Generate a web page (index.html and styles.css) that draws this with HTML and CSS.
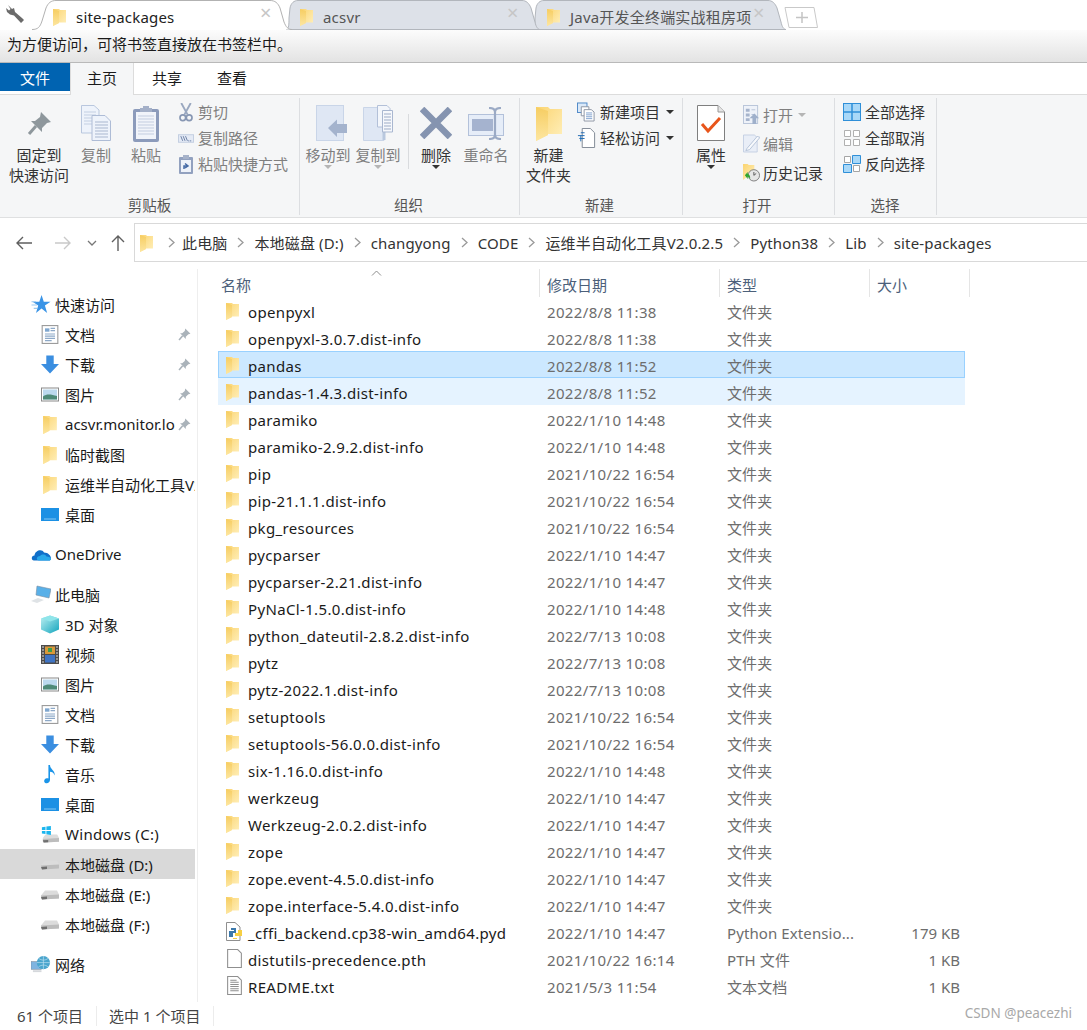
FILE: index.html
```html
<!DOCTYPE html>
<html lang="zh-CN">

<head>
  <meta charset="UTF-8">
  <title>site-packages</title>
  <link rel="stylesheet" href="styles.css">
</head>

<body>
  <svg class="sprite" xmlns="http://www.w3.org/2000/svg">
    <defs>
      <linearGradient id="folderBody" x1="0" y1="0" x2="1" y2="1">
        <stop offset="0" stop-color="#fbd470" />
        <stop offset="1" stop-color="#fff0bd" />
      </linearGradient>
      <linearGradient id="folderFront" x1="0" y1="0" x2="0" y2="1">
        <stop offset="0" stop-color="#f6cd62" />
        <stop offset="1" stop-color="#fde6a0" />
      </linearGradient>
      <linearGradient id="cube" x1="0" y1="0" x2="1" y2="1">
        <stop offset="0" stop-color="#bdf0f2" />
        <stop offset="1" stop-color="#12a5bd" />
      </linearGradient>
    </defs>
    <symbol id="i-folder" viewBox="0 0 13 18">
      <path d="M0 1H6L7 2H13V14.5H6V15L0 18Z" fill="url(#folderBody)" />
      <path d="M0 1L6 3V15L0 18Z" fill="url(#folderFront)" />
    </symbol>
    <symbol id="i-pin" viewBox="0 0 25 25">
      <path d="M14 1L24 11L20 12L15 17L15 21L4 10L8 10L13 6Z" fill="currentColor" />
      <path d="M9 15L2 23" stroke="currentColor" stroke-width="3" />
    </symbol>
    <symbol id="i-copy" viewBox="0 0 30 36">
      <path d="M.5.5H13L18 5V28H.5Z" fill="#eef3fb" stroke="#b9c7de" />
      <path d="M3 7H15M3 10H15M3 13H15M3 16H15M3 19H15" stroke="#c3cfe2" />
      <path d="M11 10.500H24L29.500 16V35.500H11Z" fill="#eef3fb" stroke="#aebcd6" />
      <path d="M14 17H27M14 20H27M14 23H27M14 26H27M14 29H27M14 32H27" stroke="#a9b7cf" />
    </symbol>
    <symbol id="i-paste" viewBox="0 0 26 37">
      <rect y="4" width="26" height="33" rx="2" fill="#8c9bbb" />
      <rect x="3" y="7" width="20" height="27" fill="#f1f4fa" />
      <path d="M5 11H21M5 14H21M5 17H21M5 20H21M5 23H21M5 26H21M5 29H21" stroke="#c3cde0" />
      <path d="M10 3H16V1H10ZM7 3H19V7H7Z" fill="#a4b0c8" />
    </symbol>
    <symbol id="i-cut" viewBox="0 0 13 18">
      <path d="M2 0L8 11M11 0L5 11" stroke="#9aa8c0" stroke-width="1.800" fill="none" />
      <circle cx="3.500" cy="14" r="2.700" fill="none" stroke="#8797b3" stroke-width="1.600" />
      <circle cx="9.500" cy="14" r="2.700" fill="none" stroke="#8797b3" stroke-width="1.600" />
    </symbol>
    <symbol id="i-path" viewBox="0 0 17 9">
      <rect x=".5" y=".5" width="16" height="8" fill="#e4eaf5" stroke="#c2cde0" />
      <path d="M3 2L5 7M5.500 2L7.500 7M8 2L10 7" stroke="#48628f" stroke-width=".8" />
      <path d="M11 7H15" stroke="#48628f" stroke-dasharray="1 1" />
    </symbol>
    <symbol id="i-shortcut" viewBox="0 0 14 19">
      <rect y="2" width="14" height="17" rx="1" fill="#92a1bf" />
      <rect x="2" y="5" width="10" height="12" fill="#eef2f9" />
      <rect x="4" y="0" width="6" height="4" fill="#a6b2c9" />
      <path d="M5 14V11H8M6 8.500L9 11L6 13" stroke="#456aa5" stroke-width="1.500" fill="none" />
    </symbol>
    <symbol id="i-moveto" viewBox="0 0 33 36">
      <rect x=".5" y=".5" width="27" height="35" fill="#dfe7f4" stroke="#c9d5e8" />
      <path d="M13 27L22 18.500V23H32V32H22V36Z" transform="translate(-1 -4)" fill="#a4b3cd" />
    </symbol>
    <symbol id="i-copyto" viewBox="0 0 30 36">
      <path d="M.5 2.500H21V35.500H.5Z" fill="#dfe7f4" stroke="#c9d5e8" />
      <path d="M21 25V35" stroke="#b9c8de" stroke-width="3" />
      <path d="M14.500.500H24L27 3.500V22H14.500Z" fill="#f3f6fb" stroke="#b3c0d8" />
      <path d="M19.500 5.500H29.500V27H19.500Z" fill="#f6f8fc" stroke="#a9b7d0" />
      <path d="M21 9H28M21 12H28M21 15H28M21 18H28M21 21H28M21 24H28" stroke="#9cabc6" />
    </symbol>
    <symbol id="i-delete" viewBox="0 0 32 32">
      <path d="M2 2L30 30M30 2L2 30" stroke="#8594b0" stroke-width="6.500" />
    </symbol>
    <symbol id="i-rename" viewBox="0 0 36 33">
      <rect x=".5" y="10.500" width="35" height="21" transform="translate(0 -3)" fill="#e6edf8" stroke="#b3c1da" />
      <rect x="4" y="12" width="21" height="12" fill="#a5b3cf" />
      <path d="M21 1C24 1 27 2 27 5V28C27 31 24 32 21 32M33 1C30 1 27 2 27 5M33 32C30 32 27 31 27 28" stroke="#9baac5" stroke-width="2.200" fill="none" />
    </symbol>
    <symbol id="i-newitem" viewBox="0 0 20 20">
      <rect x=".5" y=".5" width="10" height="10" fill="#dbe9f8" stroke="#4d87c7" />
      <path d="M4.500 4.500H12.500V14H4.500Z" fill="#fff" stroke="#8c95a3" />
      <path d="M7.500 7.500H15L18 10V19.500H7.500Z" fill="#fff" stroke="#8c95a3" />
      <path d="M9.500 11H16M9.500 13H16M9.500 15H16M9.500 17H16" stroke="#7d9fcc" />
    </symbol>
    <symbol id="i-easy" viewBox="0 0 18 21">
      <path d="M4.500.500H13L17.500 5V20.500H4.500Z" fill="#fff" stroke="#7e8794" />
      <path d="M0 8H7M1.500 11H7M3 5H7M3 8V14" stroke="#1d6ab4" fill="none" />
    </symbol>
    <symbol id="i-props" viewBox="0 0 28 36">
      <path d="M.5.500H21L27.500 7V35.500H.5Z" fill="#fff" stroke="#7f7f7f" />
      <path d="M21 .5V7H27.500" fill="#e5e5e5" stroke="#999" />
      <path d="M5 19L11 26L23 13" stroke="#e8551b" stroke-width="3" fill="none" />
    </symbol>
    <symbol id="i-open" viewBox="0 0 18 20">
      <rect x=".5" y=".5" width="15" height="19" fill="#eef2f9" stroke="#b7c3d8" />
      <path d="M3 4H7V7H3ZM3 9H7V12H3ZM3 14H7V17H3Z" fill="#a6b4cc" />
      <path d="M9 5H13M9 10H13" stroke="#b6c2d7" />
      <path d="M7 14L12 9L17 14H14V20H10V14Z" fill="#9fb0cb" />
    </symbol>
    <symbol id="i-edit" viewBox="0 0 18 19">
      <path d="M.5.500H12L15 3V18.500H.5Z" fill="#e9eef7" stroke="#c3cfe2" />
      <path d="M4 15L15 2L18 3L7 16L3 17Z" fill="#f7f9fc" stroke="#b5c2d8" />
    </symbol>
    <symbol id="i-history" viewBox="0 0 18 20">
      <path d="M0 1H5L6 2H12V14H5L0 18Z" fill="url(#folderBody)" />
      <circle cx="11.500" cy="13" r="6" fill="#e6e6e6" stroke="#7b7b7b" />
      <path d="M11.500 9.500V13L14 11" stroke="#555" fill="none" />
      <path d="M2 13L5 9.500V11.500C7 12 8 14 7.500 17C6.500 15 6 14.500 5 14.500V17Z" fill="#2fa52f" />
    </symbol>
    <symbol id="i-selall" viewBox="0 0 18 18">
      <rect x=".5" y=".5" width="17" height="17" fill="#a9d8f8" stroke="#2f8fd8" />
      <path d="M9 0V18M0 9H18" stroke="#2f8fd8" stroke-width="1.500" />
    </symbol>
    <symbol id="i-selnone" viewBox="0 0 18 18">
      <path d="M1.500 1.500H7.500V7.500H1.500ZM10.500 1.500H16.500V7.500H10.500ZM1.500 10.500H7.500V16.500H1.500ZM10.500 10.500H16.500V16.500H10.500Z" fill="#fff" stroke="#b0b0b0" />
    </symbol>
    <symbol id="i-selinv" viewBox="0 0 18 18">
      <path d="M1.500 1.500H7.500V7.500H1.500ZM10.500 10.500H16.500V16.500H10.500Z" fill="#fff" stroke="#a5a5a5" />
      <path d="M9.500.500H17.500V8.500H9.500ZM.5 9.500H8.500V17.500H.5Z" fill="#a9d8f8" stroke="#2f8fd8" />
    </symbol>
    <symbol id="i-wrench" viewBox="0 0 19 18">
      <path d="M2 0L6 4L8 3L9 7L16 13L18 15L15 18L8 10.500L4 9.500L1 7L0 3L3 5.500L4.500 4Z" fill="#6b6b6b" />
    </symbol>
    <symbol id="i-star" viewBox="0 0 17 17">
      <path d="M9 0L11 6H17L12 9.500L14 16L9 12L4 16L6 9.500L1 6H7Z" fill="#3a94e6" />
      <path d="M0 6H4M0 9H5M2 12H5" stroke="#9cc9ef" />
    </symbol>
    <symbol id="i-doc" viewBox="0 0 15 17">
      <rect x=".5" y=".5" width="14" height="16" fill="#fff" stroke="#9c9c9c" />
      <path d="M3 3H7V6H3Z" fill="#7fa7cf" />
      <path d="M8 3H12M8 5H12M3 8H12M3 10H12M3 12H12M3 14H9" stroke="#8da9c8" />
    </symbol>
    <symbol id="i-down" viewBox="0 0 17 17">
      <path d="M5 0H12V8H17L8.500 17L0 8H5Z" fill="#3b8ee0" />
    </symbol>
    <symbol id="i-pics" viewBox="0 0 18 14">
      <rect x=".5" y=".5" width="17" height="13" fill="#fff" stroke="#8a8a8a" />
      <rect x="2" y="2" width="14" height="10" fill="#bcd9ee" />
      <path d="M2 9C6 6 10 7 16 8.500V12H2Z" fill="#4f8a78" />
    </symbol>
    <symbol id="i-desk" viewBox="0 0 18 13">
      <rect width="18" height="13" fill="#1b90e4" />
      <path d="M3 11H15" stroke="#85c6f2" />
    </symbol>
    <symbol id="i-cloud" viewBox="0 0 20 14">
      <path d="M3 13C0 13 0 8 3.500 8C4 3 11 1 13 5C17 5 20 8 20 11C20 12.500 19 13 18 13Z" fill="#0f6fc9" />
      <path d="M8 13C5 13 5 8.500 9 8.500C11 6.500 14 6.500 15.500 9C18 9 20 10 20 11C20 12.500 19 13 18 13Z" fill="#28a8ea" />
    </symbol>
    <symbol id="i-pc" viewBox="0 0 20 17">
      <path d="M6 0L20 3L18 12L5 9Z" fill="#59b0e8" stroke="#7a8ea3" stroke-width=".6" />
      <path d="M0 15L7 12L13 14L6 17Z" fill="#dfe3e6" />
    </symbol>
    <symbol id="i-cube" viewBox="0 0 18 18">
      <path d="M9 0L18 3V14L9 18L0 14V3Z" fill="url(#cube)" />
      <path d="M0 3L9 6L18 3L9 0Z" fill="#8fe5ea" />
    </symbol>
    <symbol id="i-video" viewBox="0 0 18 19">
      <rect width="18" height="19" fill="#4c4c4c" />
      <rect x="4" y="1.500" width="10" height="7.500" fill="#d99a3a" />
      <rect x="4" y="10" width="10" height="7.500" fill="#3f74c4" />
      <path d="M7 3H11V7H7Z" fill="#3d9b4f" />
      <path d="M1 2H3M1 5H3M1 8H3M1 11H3M1 14H3M1 17H3M15 2H17M15 5H17M15 8H17M15 11H17M15 14H17M15 17H17" stroke="#ddd" />
    </symbol>
    <symbol id="i-music" viewBox="0 0 12 18">
      <path d="M4.500 0H6C6 4 11 5 10.500 10C9.500 7.500 8 6.500 6 6.500V14C6 16.500 3.500 18 1.500 17C0 16 0 13 3 12.500C3.500 12.400 4 12.500 4.500 12.800Z" fill="#1a94e8" />
    </symbol>
    <symbol id="i-drive" viewBox="0 0 18 10">
      <path d="M0 6L4 1H16L18 5V9L1 10L0 9Z" fill="#dcdcdc" />
      <path d="M0 6L18 5V9L1 10Z" fill="#bdbdbd" />
      <path d="M0 7.500L6 7V9.500L1 10Z" fill="#6f6f6f" />
    </symbol>
    <symbol id="i-windrive" viewBox="0 0 20 20">
      <path d="M2 14L5 10H18L20 14V18L3 19L2 18Z" fill="#dcdcdc" />
      <path d="M2 15L20 14V18L3 19Z" fill="#bdbdbd" />
      <path d="M2 16.500L8 16V18.500L3 19Z" fill="#6f6f6f" />
      <path d="M1 2L5 1.500V5H1ZM6 1.200L11 .5V5H6ZM1 6H5V9.500L1 9ZM6 6H11V10.500L6 9.700Z" fill="#1bb5ee" />
    </symbol>
    <symbol id="i-network" viewBox="0 0 21 18">
      <rect x="0" y="6" width="11" height="8" fill="#7fb4e0" stroke="#7a8a9a" stroke-width=".6" />
      <path d="M2 15H11V17H2Z" fill="#d5d8dc" />
      <circle cx="13" cy="7" r="7" fill="#4aa5cd" />
      <path d="M13 0V14M6 7H20M8 2.500C11 5 15 5 18 2.500M8 11.500C11 9 15 9 18 11.500" stroke="#bfe3f2" stroke-width=".7" fill="none" />
    </symbol>
    <symbol id="i-pyd" viewBox="0 0 17 19">
      <path d="M.5.500H9L14 5V18.500H.5Z" fill="#fff" stroke="#8f8f8f" />
      <path d="M5 6H10V11H7V15H3V9H8V8H5Z" fill="#3c79ab" />
      <path d="M16 8V14H11V17H7V16H11V14H9V11H12V8Z" fill="#f6cf44" />
    </symbol>
    <symbol id="i-file" viewBox="0 0 14 18">
      <path d="M.5.500H10L13.500 4V17.500H.5Z" fill="#fff" stroke="#8f8f8f" />
    </symbol>
    <symbol id="i-txt" viewBox="0 0 14 18">
      <path d="M.5.500H10L13.500 4V17.500H.5Z" fill="#fff" stroke="#8f8f8f" />
      <path d="M3 4H9M3 6H11M3 8H11M3 10H11M3 12H11M3 14H11" stroke="#8f8f8f" />
    </symbol>
  </svg>

  <div class="tabbar">
    <svg class="wrench"><use href="#i-wrench" /></svg>
    <div class="tab tab-active">
      <svg class="tab-shape" viewBox="0 0 260 30"><path d="M0 29.500C6 29.500 8 27 10 21L14 8C16 3 19 .5 24 .5H238C243 .5 246 3 248 8L252 22C254 27 256 29.500 260 29.500" fill="#fff" stroke="#b2b2b2" /></svg>
      <svg class="folder"><use href="#i-folder" /></svg>
      <span class="tab-title">site-packages</span>
      <span class="tab-close">×</span>
    </div>
    <div class="tab tab-second">
      <svg class="tab-shape" viewBox="0 0 254 30"><path d="M0 29.500C3 29 3 24 3 18L4 8C5 3 8 .5 12 .5H236C240 .5 243 3 245 8L249 22C250 27 252 29.500 254 29.500Z" fill="#dde1e8" stroke="#b2b6bc" /></svg>
      <svg class="folder"><use href="#i-folder" /></svg>
      <span class="tab-title">acsvr</span>
      <span class="tab-close">×</span>
    </div>
    <div class="tab tab-third">
      <svg class="tab-shape" viewBox="0 0 254 30"><path d="M0 29.500C3 29 3 24 3 18L4 8C5 3 8 .5 12 .5H236C240 .5 243 3 245 8L249 22C250 27 252 29.500 254 29.500Z" fill="#dde1e8" stroke="#b2b6bc" /></svg>
      <svg class="folder"><use href="#i-folder" /></svg>
      <span class="tab-title">Java开发全终端实战租房项</span>
      <span class="tab-close">×</span>
    </div>
    <div class="tab-new">
      <svg viewBox="0 0 34 21"><path d="M1 .5H30L33.500 20.500H5Z" fill="#fff" stroke="#c9c9c9" /><path d="M18 5V16M12 10.500H24" stroke="#c4c4c4" stroke-width="1.500" /></svg>
    </div>
  </div>

  <div class="bookmarks">为方便访问，可将书签直接放在书签栏中。</div>

  <div class="ribbon-tabs">
    <div class="rtab rtab-file">文件</div>
    <div class="rtab rtab-home">主页</div>
    <div class="rtab rtab-share">共享</div>
    <div class="rtab rtab-view">查看</div>
  </div>

  <div class="ribbon">
    <section class="group group-clip">
      <div class="group-body">
        <div class="big big-pin">
          <div class="big-icon"><svg class="ic-pin"><use href="#i-pin" /></svg></div>
          <span>固定到<br>快速访问</span>
        </div>
        <div class="big big-copy off">
          <div class="big-icon"><svg class="ic-copy"><use href="#i-copy" /></svg></div>
          <span>复制</span>
        </div>
        <div class="big big-paste off">
          <div class="big-icon"><svg class="ic-paste"><use href="#i-paste" /></svg></div>
          <span>粘贴</span>
        </div>
        <div class="small-col off">
          <div class="small"><svg class="ic-s"><use href="#i-cut" /></svg>剪切</div>
          <div class="small"><svg class="ic-s"><use href="#i-path" /></svg>复制路径</div>
          <div class="small"><svg class="ic-s"><use href="#i-shortcut" /></svg>粘贴快捷方式</div>
        </div>
      </div>
      <div class="group-label">剪贴板</div>
    </section>

    <section class="group group-org">
      <div class="group-body">
        <div class="big big-move off">
          <div class="big-icon"><svg class="ic-move"><use href="#i-moveto" /></svg></div>
          <span>移动到</span><i class="caret caret-off"></i>
        </div>
        <div class="big big-move off">
          <div class="big-icon"><svg class="ic-copy"><use href="#i-copyto" /></svg></div>
          <span>复制到</span><i class="caret caret-off"></i>
        </div>
        <div class="vsep"></div>
        <div class="big big-del">
          <div class="big-icon"><svg class="ic-del"><use href="#i-delete" /></svg></div>
          <span>删除</span><i class="caret"></i>
        </div>
        <div class="big big-ren off">
          <div class="big-icon"><svg class="ic-ren"><use href="#i-rename" /></svg></div>
          <span>重命名</span>
        </div>
      </div>
      <div class="group-label">组织</div>
    </section>

    <section class="group group-new">
      <div class="group-body">
        <div class="big big-folder">
          <div class="big-icon"><svg class="ic-folder"><use href="#i-folder" /></svg></div>
          <span>新建<br>文件夹</span>
        </div>
        <div class="small-col small-col-new">
          <div class="small"><svg class="ic-s ic-s-new"><use href="#i-newitem" /></svg>新建项目<i class="caret caret-side"></i></div>
          <div class="small"><svg class="ic-s ic-s-new"><use href="#i-easy" /></svg>轻松访问<i class="caret caret-side"></i></div>
        </div>
      </div>
      <div class="group-label">新建</div>
    </section>

    <section class="group group-open">
      <div class="group-body">
        <div class="big big-props">
          <div class="big-icon"><svg class="ic-props"><use href="#i-props" /></svg></div>
          <span>属性</span><i class="caret"></i>
        </div>
        <div class="small-col small-col-open">
          <div class="small off"><svg class="ic-s ic-s-open"><use href="#i-open" /></svg>打开<i class="caret caret-side caret-off"></i></div>
          <div class="small off"><svg class="ic-s ic-s-open"><use href="#i-edit" /></svg>编辑</div>
          <div class="small"><svg class="ic-s ic-s-open"><use href="#i-history" /></svg>历史记录</div>
        </div>
      </div>
      <div class="group-label">打开</div>
    </section>

    <section class="group group-select">
      <div class="group-body">
        <div class="small-col small-col-select">
          <div class="small"><svg class="ic-s ic-s-sel"><use href="#i-selall" /></svg>全部选择</div>
          <div class="small"><svg class="ic-s ic-s-sel"><use href="#i-selnone" /></svg>全部取消</div>
          <div class="small"><svg class="ic-s ic-s-sel"><use href="#i-selinv" /></svg>反向选择</div>
        </div>
      </div>
      <div class="group-label">选择</div>
    </section>
  </div>

  <div class="nav">
    <div class="nav-buttons">
      <svg class="nav-btn" viewBox="0 0 16 14"><path d="M16 7H1M7 1L1 7L7 13" stroke="#5f5f5f" stroke-width="1.400" fill="none" /></svg>
      <svg class="nav-btn nav-fwd" viewBox="0 0 16 14"><path d="M0 7H15M9 1L15 7L9 13" stroke="#c9c9c9" stroke-width="1.400" fill="none" /></svg>
      <svg class="nav-down" viewBox="0 0 10 6"><path d="M1 1L5 5L9 1" stroke="#777" stroke-width="1.300" fill="none" /></svg>
      <svg class="nav-up" viewBox="0 0 14 16"><path d="M7 16V1M1 7L7 1L13 7" stroke="#5f5f5f" stroke-width="1.400" fill="none" /></svg>
    </div>
    <div class="address">
      <svg class="folder"><use href="#i-folder" /></svg>
      <svg class="chev chev-first" viewBox="0 0 7 11"><path d="M1 1L6 5.500L1 10" /></svg>
      <span>此电脑</span>
      <svg class="chev" viewBox="0 0 7 11"><path d="M1 1L6 5.500L1 10" /></svg>
      <span>本地磁盘 (D:)</span>
      <svg class="chev" viewBox="0 0 7 11"><path d="M1 1L6 5.500L1 10" /></svg>
      <span>changyong</span>
      <svg class="chev" viewBox="0 0 7 11"><path d="M1 1L6 5.500L1 10" /></svg>
      <span>CODE</span>
      <svg class="chev" viewBox="0 0 7 11"><path d="M1 1L6 5.500L1 10" /></svg>
      <span>运维半自动化工具V2.0.2.5</span>
      <svg class="chev" viewBox="0 0 7 11"><path d="M1 1L6 5.500L1 10" /></svg>
      <span>Python38</span>
      <svg class="chev" viewBox="0 0 7 11"><path d="M1 1L6 5.500L1 10" /></svg>
      <span>Lib</span>
      <svg class="chev" viewBox="0 0 7 11"><path d="M1 1L6 5.500L1 10" /></svg>
      <span>site-packages</span>
    </div>
  </div>

  <div class="main">
    <aside class="sidebar">
      <div class="side-group">
        <div class="side-item side-head"><svg class="side-ic"><use href="#i-star" /></svg><span class="side-label">快速访问</span></div>
        <div class="side-item"><svg class="side-ic"><use href="#i-doc" /></svg><span class="side-label">文档</span><svg class="side-pin"><use href="#i-pin" /></svg></div>
        <div class="side-item"><svg class="side-ic"><use href="#i-down" /></svg><span class="side-label">下载</span><svg class="side-pin"><use href="#i-pin" /></svg></div>
        <div class="side-item"><svg class="side-ic"><use href="#i-pics" /></svg><span class="side-label">图片</span><svg class="side-pin"><use href="#i-pin" /></svg></div>
        <div class="side-item"><svg class="side-ic"><use href="#i-folder" /></svg><span class="side-label">acsvr.monitor.log</span><svg class="side-pin"><use href="#i-pin" /></svg></div>
        <div class="side-item"><svg class="side-ic"><use href="#i-folder" /></svg><span class="side-label">临时截图</span></div>
        <div class="side-item"><svg class="side-ic"><use href="#i-folder" /></svg><span class="side-label">运维半自动化工具V2.0.2.5</span></div>
        <div class="side-item"><svg class="side-ic"><use href="#i-desk" /></svg><span class="side-label">桌面</span></div>
      </div>
      <div class="side-group">
        <div class="side-item side-head"><svg class="side-ic"><use href="#i-cloud" /></svg><span class="side-label">OneDrive</span></div>
      </div>
      <div class="side-group">
        <div class="side-item side-head"><svg class="side-ic"><use href="#i-pc" /></svg><span class="side-label">此电脑</span></div>
        <div class="side-item"><svg class="side-ic"><use href="#i-cube" /></svg><span class="side-label">3D 对象</span></div>
        <div class="side-item"><svg class="side-ic"><use href="#i-video" /></svg><span class="side-label">视频</span></div>
        <div class="side-item"><svg class="side-ic"><use href="#i-pics" /></svg><span class="side-label">图片</span></div>
        <div class="side-item"><svg class="side-ic"><use href="#i-doc" /></svg><span class="side-label">文档</span></div>
        <div class="side-item"><svg class="side-ic"><use href="#i-down" /></svg><span class="side-label">下载</span></div>
        <div class="side-item"><svg class="side-ic"><use href="#i-music" /></svg><span class="side-label">音乐</span></div>
        <div class="side-item"><svg class="side-ic"><use href="#i-desk" /></svg><span class="side-label">桌面</span></div>
        <div class="side-item"><svg class="side-ic"><use href="#i-windrive" /></svg><span class="side-label side-latin">Windows (C:)</span></div>
        <div class="side-item side-current"><svg class="side-ic"><use href="#i-drive" /></svg><span class="side-label">本地磁盘 (D:)</span></div>
        <div class="side-item"><svg class="side-ic"><use href="#i-drive" /></svg><span class="side-label">本地磁盘 (E:)</span></div>
        <div class="side-item"><svg class="side-ic"><use href="#i-drive" /></svg><span class="side-label">本地磁盘 (F:)</span></div>
      </div>
      <div class="side-group">
        <div class="side-item side-head"><svg class="side-ic"><use href="#i-network" /></svg><span class="side-label">网络</span></div>
      </div>
    </aside>

    <div class="files">
      <div class="head">
        <svg class="sort" viewBox="0 0 11 6"><path d="M1 5.500L5.500 1L10 5.500" /></svg>
        <div class="col-name">名称</div>
        <div class="col-date">修改日期</div>
        <div class="col-type">类型</div>
        <div class="col-size">大小</div>
      </div>

      <div class="row"><svg class="row-ic"><use href="#i-folder" /></svg><span class="name">openpyxl</span><span class="date">2022/8/8 11:38</span><span class="type">文件夹</span></div>
      <div class="row"><svg class="row-ic"><use href="#i-folder" /></svg><span class="name">openpyxl-3.0.7.dist-info</span><span class="date">2022/8/8 11:38</span><span class="type">文件夹</span></div>
      <div class="row row-selected"><svg class="row-ic"><use href="#i-folder" /></svg><span class="name">pandas</span><span class="date">2022/8/8 11:52</span><span class="type">文件夹</span></div>
      <div class="row row-hover"><svg class="row-ic"><use href="#i-folder" /></svg><span class="name">pandas-1.4.3.dist-info</span><span class="date">2022/8/8 11:52</span><span class="type">文件夹</span></div>
      <div class="row"><svg class="row-ic"><use href="#i-folder" /></svg><span class="name">paramiko</span><span class="date">2022/1/10 14:48</span><span class="type">文件夹</span></div>
      <div class="row"><svg class="row-ic"><use href="#i-folder" /></svg><span class="name">paramiko-2.9.2.dist-info</span><span class="date">2022/1/10 14:48</span><span class="type">文件夹</span></div>
      <div class="row"><svg class="row-ic"><use href="#i-folder" /></svg><span class="name">pip</span><span class="date">2021/10/22 16:54</span><span class="type">文件夹</span></div>
      <div class="row"><svg class="row-ic"><use href="#i-folder" /></svg><span class="name">pip-21.1.1.dist-info</span><span class="date">2021/10/22 16:54</span><span class="type">文件夹</span></div>
      <div class="row"><svg class="row-ic"><use href="#i-folder" /></svg><span class="name">pkg_resources</span><span class="date">2021/10/22 16:54</span><span class="type">文件夹</span></div>
      <div class="row"><svg class="row-ic"><use href="#i-folder" /></svg><span class="name">pycparser</span><span class="date">2022/1/10 14:47</span><span class="type">文件夹</span></div>
      <div class="row"><svg class="row-ic"><use href="#i-folder" /></svg><span class="name">pycparser-2.21.dist-info</span><span class="date">2022/1/10 14:47</span><span class="type">文件夹</span></div>
      <div class="row"><svg class="row-ic"><use href="#i-folder" /></svg><span class="name">PyNaCl-1.5.0.dist-info</span><span class="date">2022/1/10 14:48</span><span class="type">文件夹</span></div>
      <div class="row"><svg class="row-ic"><use href="#i-folder" /></svg><span class="name">python_dateutil-2.8.2.dist-info</span><span class="date">2022/7/13 10:08</span><span class="type">文件夹</span></div>
      <div class="row"><svg class="row-ic"><use href="#i-folder" /></svg><span class="name">pytz</span><span class="date">2022/7/13 10:08</span><span class="type">文件夹</span></div>
      <div class="row"><svg class="row-ic"><use href="#i-folder" /></svg><span class="name">pytz-2022.1.dist-info</span><span class="date">2022/7/13 10:08</span><span class="type">文件夹</span></div>
      <div class="row"><svg class="row-ic"><use href="#i-folder" /></svg><span class="name">setuptools</span><span class="date">2021/10/22 16:54</span><span class="type">文件夹</span></div>
      <div class="row"><svg class="row-ic"><use href="#i-folder" /></svg><span class="name">setuptools-56.0.0.dist-info</span><span class="date">2021/10/22 16:54</span><span class="type">文件夹</span></div>
      <div class="row"><svg class="row-ic"><use href="#i-folder" /></svg><span class="name">six-1.16.0.dist-info</span><span class="date">2022/1/10 14:48</span><span class="type">文件夹</span></div>
      <div class="row"><svg class="row-ic"><use href="#i-folder" /></svg><span class="name">werkzeug</span><span class="date">2022/1/10 14:47</span><span class="type">文件夹</span></div>
      <div class="row"><svg class="row-ic"><use href="#i-folder" /></svg><span class="name">Werkzeug-2.0.2.dist-info</span><span class="date">2022/1/10 14:47</span><span class="type">文件夹</span></div>
      <div class="row"><svg class="row-ic"><use href="#i-folder" /></svg><span class="name">zope</span><span class="date">2022/1/10 14:47</span><span class="type">文件夹</span></div>
      <div class="row"><svg class="row-ic"><use href="#i-folder" /></svg><span class="name">zope.event-4.5.0.dist-info</span><span class="date">2022/1/10 14:47</span><span class="type">文件夹</span></div>
      <div class="row"><svg class="row-ic"><use href="#i-folder" /></svg><span class="name">zope.interface-5.4.0.dist-info</span><span class="date">2022/1/10 14:47</span><span class="type">文件夹</span></div>
      <div class="row"><svg class="row-ic row-ic-file"><use href="#i-pyd" /></svg><span class="name">_cffi_backend.cp38-win_amd64.pyd</span><span class="date">2022/1/10 14:47</span><span class="type">Python Extensio...</span><span class="size">179 KB</span></div>
      <div class="row"><svg class="row-ic row-ic-file"><use href="#i-file" /></svg><span class="name">distutils-precedence.pth</span><span class="date">2021/10/22 16:14</span><span class="type">PTH 文件</span><span class="size">1 KB</span></div>
      <div class="row"><svg class="row-ic row-ic-file"><use href="#i-txt" /></svg><span class="name">README.txt</span><span class="date">2021/5/3 11:54</span><span class="type">文本文档</span><span class="size">1 KB</span></div>
    </div>
  </div>

  <div class="status">
    <span class="status-cell status-count">61 个项目</span>
    <span class="status-cell status-sel">选中 1 个项目</span>
  </div>
  <div class="watermark">CSDN @peacezhi</div>
</body>

</html>
```

FILE: styles.css
```css
* {
  box-sizing: border-box;
  margin: 0;
  padding: 0;
}

html, body {
  width: 1087px;
  height: 1030px;
  overflow: hidden;
}

body {
  position: relative;
  background: #fff;
  color: #1a1a1a;
  font-family: "Noto Sans", "Noto Sans CJK SC", sans-serif;
  font-size: 15px;
}

svg {
  display: block;
  flex: none;
}

.sprite {
  width: 0;
  height: 0;
  overflow: hidden;
}

/* browser tabs */
.tabbar {
  height: 30px;
  display: flex;
  padding-left: 32px;
}

.wrench {
  position: absolute;
  left: 6px;
  top: 5px;
  width: 19px;
  height: 18px;
}

.tab {
  position: relative;
  height: 30px;
  width: 254px;
  display: flex;
  align-items: center;
  gap: 10px;
  padding-top: 3px;
  font-size: 15px;
  letter-spacing: .2px;
  color: #555;
}

.tab > * {
  position: relative;
}

.tab .tab-shape {
  position: absolute;
  left: 0;
  top: 0;
  width: 100%;
  height: 30px;
}

.tab-active {
  width: 260px;
  padding-left: 21px;
  color: #222;
  z-index: 2;
}

.tab-second {
  margin-left: -6px;
  padding-left: 14px;
  z-index: 1;
}

.tab-third {
  margin-left: -8px;
  padding-left: 15px;
}

.folder {
  width: 13px;
  height: 18px;
}

.tab-close {
  position: absolute;
  color: #c6c6c6;
  font-size: 20px;
  line-height: 24px;
  top: 1px;
}

.tab-active .tab-close {
  left: 228px;
}

.tab-second .tab-close {
  left: 221px;
}

.tab-third .tab-close {
  left: 221px;
}

.tab-new {
  width: 34px;
  height: 21px;
  margin: 7px 0 0 -2px;
}

.bookmarks {
  height: 33px;
  padding: 0 0 0 7px;
  line-height: 29px;
  font-size: 15px;
  color: #1a1a1a;
  background: linear-gradient(#fcfcfc, #e3e3e3);
  border-bottom: 1px solid #b9b9b9;
}

/* ribbon */
.ribbon-tabs {
  height: 32px;
  display: flex;
  background: #fff;
  border-bottom: 1px solid #dcdcdc;
}

.rtab {
  height: 28px;
  line-height: 30px;
  text-align: center;
}

.rtab-file {
  width: 70px;
  background: #0063b1;
  color: #fff;
}

.rtab-home {
  width: 64px;
  height: 32px;
  background: #f5f6f7;
  border: 1px solid #dcdcdc;
  border-top: 0;
  border-bottom: 0;
}

.rtab-share {
  width: 66px;
}

.rtab-view {
  width: 64px;
}

.ribbon {
  height: 123px;
  display: flex;
  padding: 3px 0 2px;
  background: #f5f6f7;
  border-bottom: 1px solid #dfe0e1;
  color: #333;
}

.group {
  display: flex;
  flex-direction: column;
  border-right: 1px solid #dcdee1;
}

.group-clip {
  width: 300px;
  padding-left: 9px;
}

.group-org {
  width: 220px;
  padding-left: 3px;
}

.group-new {
  width: 163px;
  padding-left: 6px;
}

.group-open {
  width: 152px;
  padding-left: 13px;
}

.group-select {
  width: 102px;
  padding-left: 8px;
}

.group-body {
  flex: 1;
  display: flex;
  padding-top: 3px;
}

.group-label {
  height: 24px;
  line-height: 28px;
  text-align: center;
  margin-left: -9px;
  color: #555;
  font-size: 14.500px;
}

.group-org .group-label {
  margin-left: -5px;
}

.group-new .group-label {
  margin-left: -9px;
}

.group-open .group-label {
  margin-left: -16px;
}

.group-select .group-label {
  margin-left: -9px;
}

.big {
  display: flex;
  flex-direction: column;
  align-items: center;
  text-align: center;
  line-height: 20px;
  white-space: nowrap;
}

.big-icon {
  height: 44px;
  display: flex;
  align-items: center;
  justify-content: center;
}

.big-pin {
  width: 60px;
}

.big-copy {
  width: 54px;
}

.big-paste {
  width: 46px;
}

.big-move {
  width: 50px;
}

.big-del {
  width: 42px;
}

.big-ren {
  width: 58px;
}

.big-folder {
  width: 45px;
}

.big-props {
  width: 30px;
}

.off {
  color: #7f7f7f;
}

.ic-pin {
  width: 25px;
  height: 25px;
  color: #8e979c;
}

.ic-copy {
  width: 30px;
  height: 36px;
}

.ic-paste {
  width: 26px;
  height: 37px;
}

.ic-move {
  width: 33px;
  height: 36px;
  margin-left: 8px;
}

.ic-del {
  width: 32px;
  height: 32px;
}

.ic-ren {
  width: 36px;
  height: 33px;
}

.ic-folder {
  width: 26px;
  height: 36px;
}

.ic-props {
  width: 28px;
  height: 36px;
}

.vsep {
  width: 1px;
  height: 55px;
  margin: 13px 6px 0 5px;
  background: #d9dbde;
}

.caret {
  display: block;
  width: 0;
  height: 0;
  margin-top: 0;
  border: 4px solid transparent;
  border-top: 4px solid #333;
  border-bottom: 0;
}

.caret-off {
  border-top-color: #b5b5b5;
}

.caret-side {
  margin: 0 0 0 2px;
}

.small-col {
  margin: -2px 0 0 9px;
  white-space: nowrap;
}

.small {
  height: 26px;
  display: flex;
  align-items: center;
  gap: 4px;
  line-height: 26px;
}

.ic-s {
  width: 16px;
  height: 19px;
}

.small-col-new {
  margin-left: 6px;
}

.ic-s-new {
  width: 19px;
  height: 20px;
}

.small-col-open {
  margin: -1px 0 0 17px;
}

.small-col-open .small {
  height: 29px;
  gap: 3px;
}

.ic-s-open {
  width: 17px;
  height: 19px;
}

.small-col-select {
  margin-left: 0;
}

.ic-s-sel {
  width: 18px;
  height: 18px;
}

/* back, forward, up and the address box */
.nav {
  height: 51px;
  display: flex;
  padding-top: 5px;
}

.nav-buttons {
  width: 134px;
  height: 39px;
  display: flex;
  align-items: center;
  padding-left: 16px;
}

.nav-btn {
  width: 16px;
  height: 14px;
}

.nav-fwd {
  margin-left: 23px;
}

.nav-down {
  width: 10px;
  height: 6px;
  margin-left: 16px;
}

.nav-up {
  width: 14px;
  height: 16px;
  margin-left: 14px;
}

.address {
  flex: 1;
  height: 39px;
  display: flex;
  align-items: center;
  gap: 10px;
  padding-left: 5px;
  border: 1px solid #d9d9d9;
  border-right: 0;
  color: #333;
  letter-spacing: .15px;
  white-space: nowrap;
}

.chev {
  width: 7px;
  height: 11px;
}

.chev path {
  fill: none;
  stroke: #9a9a9a;
  stroke-width: 1.300;
}

.chev-first {
  margin: 0 -3px 0 5px;
}

/* sidebar and list */
.main {
  height: 733px;
  display: flex;
}

.sidebar {
  width: 198px;
  padding: 20px 2px 0 0;
  border-right: 1px solid #eeeeee;
}

.side-group {
  margin-bottom: 10px;
}

.side-item {
  height: 30px;
  display: flex;
  align-items: center;
  padding-left: 41px;
  white-space: nowrap;
}

.side-head {
  padding-left: 31px;
}

.side-current {
  background: #d9d9d9;
}

.side-ic {
  width: 18px;
  height: 19px;
  margin-right: 6px;
}

.side-head .side-ic {
  width: 20px;
  margin-right: 4px;
}

.side-label {
  flex: 1;
  min-width: 0;
  overflow: hidden;
}

.side-latin {
  letter-spacing: .3px;
}

.side-pin {
  width: 13px;
  height: 13px;
  margin: 0 4px 0 3px;
  color: #aab3ba;
}

.files {
  flex: 1;
  padding-left: 20px;
}

.head {
  position: relative;
  height: 28px;
  display: flex;
  color: #4c607a;
  line-height: 32px;
}

.head > div {
  border-right: 1px solid #e5e5e5;
  padding-left: 7px;
}

.head > .col-name {
  padding-left: 3px;
}

.sort {
  position: absolute;
  left: 153px;
  top: 1px;
  width: 11px;
  height: 6px;
}

.sort path {
  fill: none;
  stroke: #8c8c8c;
}

.col-name {
  width: 322px;
}

.col-date {
  width: 180px;
}

.col-type {
  width: 150px;
}

.col-size {
  width: 100px;
}

.row {
  width: 747px;
  height: 27px;
  display: flex;
  align-items: center;
  padding-top: 2px;
  white-space: nowrap;
  color: #6d6d6d;
}

.row-selected {
  background: #cce8ff;
  box-shadow: inset 0 0 0 1px #99d1ff;
}

.row-hover {
  background: #e5f3ff;
}

.row-ic {
  width: 13px;
  height: 18px;
  margin: -2px 9px 0 8px;
}

.row-ic-file {
  width: 17px;
  height: 19px;
  margin: -2px 5px 0 8px;
}

.name {
  width: 299px;
  color: #1a1a1a;
  letter-spacing: .35px;
}

.date {
  width: 180px;
  letter-spacing: .35px;
}

.type {
  width: 150px;
  letter-spacing: .1px;
}

.size {
  width: 83px;
  text-align: right;
}

.status {
  height: 27px;
  display: flex;
  align-items: center;
  color: #444;
}

.status-cell {
  border-right: 1px solid #ececec;
  line-height: 20px;
}

.status-count {
  width: 97px;
  padding-left: 17px;
}

.status-sel {
  width: 117px;
  padding-left: 12px;
}

.watermark {
  position: absolute;
  right: 15px;
  top: 1004px;
  color: #a8a8a8;
  font-size: 13.500px;
}
```
